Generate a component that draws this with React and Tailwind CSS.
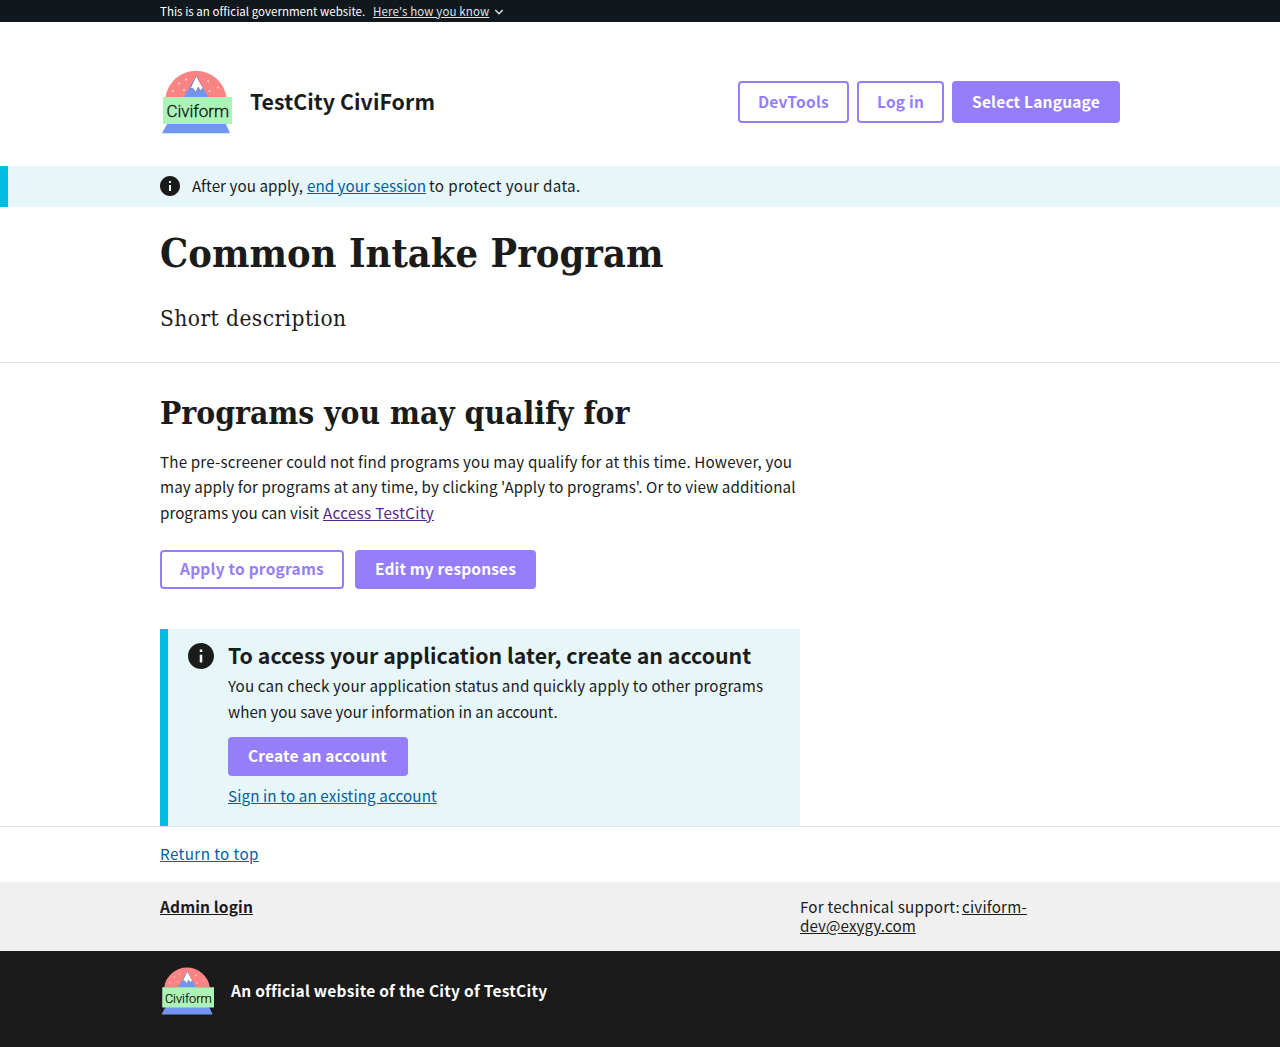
function Logo({ className }) {
  return (
    <svg viewBox="0 0 72 72" className={className} role="img" aria-label="Civiform logo">
      <path d="M5.5 31.5a30.8 30.8 0 0 1 61 0z" fill="#fa8484" transform="translate(0 -.3)" />
      <path d="M36 10 48.5 31.5H23.5z" fill="#7295f2" />
      <path d="M36.3 9.8 43 21.8 40.6 25 38.2 21.2 35.8 26.2 32.8 22.2 30 23z" fill="#fff" stroke="#6b6b75" strokeWidth=".6" />
      <g fill="#fde0e0">
        <circle cx="19" cy="17.5" r=".9" />
        <circle cx="26" cy="13.5" r=".9" />
        <circle cx="24" cy="24" r=".9" />
        <circle cx="13" cy="25" r=".9" />
        <circle cx="48" cy="15" r=".9" />
        <circle cx="58" cy="21.5" r=".9" />
        <circle cx="49.5" cy="25" r=".9" />
      </g>
      <path d="M7.5 57H65.5L70 67.3H2z" fill="#7295f2" />
      <rect x="3" y="31" width="69" height="27" fill="#acf3b8" />
      <text x="6.5" y="51.4" textLength="62.5" fontFamily="Roboto, sans-serif" fontWeight="300" fontSize="17" fill="#111" stroke="#111" strokeWidth=".3">Civiform</text>
    </svg>
  );
}

function InfoIcon({ className }) {
  return (
    <svg viewBox="2 2 20 20" className={className} aria-hidden="true">
      <path fill="#1b1b1b" d="M12 2C6.48 2 2 6.48 2 12s4.48 10 10 10 10-4.48 10-10S17.52 2 12 2zm1 15h-2v-6h2v6zm0-8h-2V7h2v2z" />
    </svg>
  );
}

function Button({ filled, className, children }) {
  return (
    <button
      className={
        'flex items-center justify-center whitespace-nowrap rounded-[4px] pb-[2px] text-[15.5px] font-bold leading-5 ' +
        (filled ? 'bg-[#967efb] text-white ' : 'border-2 border-[#967efb] bg-white text-[#967efb] ') +
        className
      }
    >
      {children}
    </button>
  );
}

export default function App() {
  return (
    <div className="h-[1047px] w-[1280px] overflow-hidden bg-white font-['Noto_Sans_CJK_SC','Noto_Sans',sans-serif] text-[15.2px] leading-[25.44px] text-[#1b1b1b]">
      <div className="flex h-[22px] items-center whitespace-nowrap bg-[#11181d] px-40 text-[11.5px] leading-[22px] text-white">
        <span className="mr-2 w-[205px] tracking-[0.03px]">This is an official government website.</span>
        <a className="tracking-[0.12px] text-[#dfe1e2] underline underline-offset-1">Here's how you know</a>
        <svg viewBox="0 0 10 6" className="ml-[5px] mt-px h-[6px] w-[10px]" fill="none" stroke="#dfe1e2" strokeWidth="1.5">
          <path d="m1.3 1 3.7 3.7L8.7 1" />
        </svg>
      </div>

      <header className="flex h-[144px] items-center justify-between px-40 pt-4">
        <div className="flex items-center">
          <Logo className="h-[72px] w-[72px]" />
          <span className="ml-[18px] whitespace-nowrap pb-[3px] text-[21.3px] font-bold leading-8 tracking-[0.07px]">TestCity CiviForm</span>
        </div>
        <nav className="flex gap-2">
          <Button className="h-[42px] w-[111px] tracking-[0.25px]">DevTools</Button>
          <Button className="h-[42px] w-[87px] tracking-[0.2px]">Log in</Button>
          <Button filled className="h-[42px] w-[168px] tracking-[0.2px]">Select Language</Button>
        </nav>
      </header>

      <section className="flex h-[41px] items-start whitespace-nowrap border-l-8 border-[#00bde3] bg-[#e7f6f8] pl-[152px] pt-[7px]">
        <InfoIcon className="mr-3 mt-[3px] h-5 w-5" />
        <p className="flex">
          <span className="w-[115px] tracking-[0.05px]">After you apply,</span>
          <a className="mr-[3px] w-[119px] tracking-[0.03px] text-[#005ea2] underline underline-offset-1">end your session</a>
          <span className="tracking-[0.35px]">to protect your data.</span>
        </p>
      </section>

      <section className="h-[156px] border-b border-[#dfe1e2] px-40 pt-[23px] font-['DejaVu_Serif_Condensed','DejaVu_Serif',serif] font-stretch-condensed">
        <h1 className="text-[39.4px] font-bold leading-[46px] tracking-[0.05px]">Common Intake Program</h1>
        <p className="mt-[27px] text-[22.5px] leading-[30px] tracking-[0.45px]">Short description</p>
      </section>

      <main className="h-[464px] border-b border-[#dfe1e2] px-40 pt-[30px]">
        <h2 className="font-['DejaVu_Serif_Condensed','DejaVu_Serif',serif] text-[31.5px] font-bold leading-[40px] font-stretch-condensed">Programs you may qualify for</h2>
        <p className="mt-[16px] whitespace-nowrap">
          <span className="block tracking-[0.16px]">The pre-screener could not find programs you may qualify for at this time. However, you</span>
          <span className="block tracking-[0.09px]">may apply for programs at any time, by clicking 'Apply to programs'. Or to view additional</span>
          <span className="flex">
            <span className="w-[163px]">programs you can visit</span>
            <a className="tracking-[0.3px] text-[#54278f] underline underline-offset-1">Access TestCity</a>
          </span>
        </p>
        <div className="mt-[24.68px] flex gap-[11px]">
          <Button className="h-[39px] w-[184px] tracking-[0.22px]">Apply to programs</Button>
          <Button filled className="h-[39px] w-[181px] tracking-[0.14px]">Edit my responses</Button>
        </div>

        <section className="mt-10 flex h-[197px] w-[640px] whitespace-nowrap border-l-8 border-[#00bde3] bg-[#e7f6f8] pl-5 pt-[10px]">
          <InfoIcon className="mr-[14px] mt-[4px] h-[26px] w-[26px] shrink-0" />
          <div>
            <h3 className="text-[21.34px] font-bold leading-8 tracking-[0.01px]">To access your application later, create an account</h3>
            <p className="mt-px leading-[26px]">
              <span className="block tracking-[0.155px]">You can check your application status and quickly apply to other programs</span>
              <span className="block">when you save your information in an account.</span>
            </p>
            <Button filled className="mt-[13px] h-[39px] w-[180px] pr-px tracking-[0.15px]">Create an account</Button>
            <a className="mt-[7px] block w-fit tracking-[0.12px] text-[#005ea2] underline underline-offset-1">Sign in to an existing account</a>
          </div>
        </section>
      </main>

      <footer>
        <div className="h-[55px] px-40 pt-[14px]">
          <a className="block w-fit tracking-[0.42px] text-[#005ea2] underline underline-offset-1">Return to top</a>
        </div>
        <div className="flex h-[69px] bg-[#f0f0f0] px-40 pt-[15px] leading-[19px]">
          <a className="w-[640px] text-[15.5px] font-bold tracking-[0.13px] underline underline-offset-1">Admin login</a>
          <p className="whitespace-nowrap">
            <span className="flex">
              <span className="w-[162px] tracking-[0.21px]">For technical support:</span>
              <a className="tracking-[0.19px] underline underline-offset-1">civiform-</a>
            </span>
            <a className="block w-fit tracking-[0.08px] underline underline-offset-1">dev@exygy.com</a>
          </p>
        </div>
        <div className="flex h-[96px] bg-[#1b1b1b] px-40 pt-[13px] text-white">
          <Logo className="h-[54px] w-[54px]" />
          <span className="ml-[17px] mt-[14px] whitespace-nowrap text-[15.5px] font-bold tracking-[0.26px]">An official website of the City of TestCity</span>
        </div>
      </footer>
    </div>
  );
}
